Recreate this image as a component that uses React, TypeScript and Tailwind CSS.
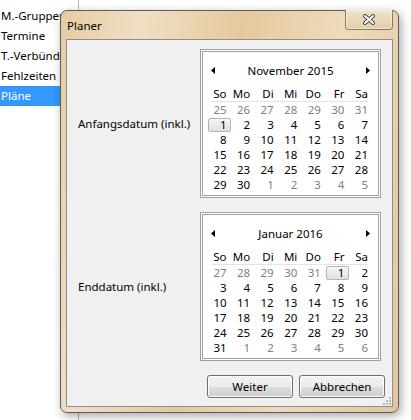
import React from 'react';

interface DayCell {
  d: number;
  cur: boolean;
}

const buildDays = (lead: number, prevLen: number, len: number): DayCell[] => {
  const cells: DayCell[] = [];
  for (let i = lead; i > 0; i--) cells.push({ d: prevLen - i + 1, cur: false });
  for (let d = 1; d <= len; d++) cells.push({ d, cur: true });
  let n = 1;
  while (cells.length < 42) cells.push({ d: n++, cur: false });
  return cells;
};

const weekDays = ['So', 'Mo', 'Di', 'Mi', 'Do', 'Fr', 'Sa'];

const listItems = ['M.-Gruppen', 'Termine', 'T.-Verbünde', 'Fehlzeiten', 'Pläne'];

const Arrow = ({ dir }: { dir: 'left' | 'right' }) => (
  <svg width="4" height="7" viewBox="0 0 4 7">
    {dir === 'left' ? <polygon points="4,0 4,7 0,3.5" fill="#000" /> : <polygon points="0,0 0,7 4,3.5" fill="#000" />}
  </svg>
);

const Calendar = ({ title, days }: { title: string; days: DayCell[] }) => {
  return (
    <div className="w-[181px] border border-[#a0a0a0] bg-white p-px">
      <div className="border border-[#a0a0a0] bg-white pt-[11px] pb-[3px]">
        <div className="flex h-[15px] items-center justify-between pl-[8px] pr-[8px]">
          <Arrow dir="left" />
          <span className="text-[11.5px] leading-none text-black">{title}</span>
          <Arrow dir="right" />
        </div>
        <div className="mt-[8px] grid h-[15px] grid-cols-7 pr-[10px]">
          {weekDays.map((w) => (
            <span key={w} className="text-right text-[11.5px] leading-[15px] text-black">
              {w}
            </span>
          ))}
        </div>
        <div className="ml-[9px] mr-[10px] h-px bg-[#e3e3e3]" />
        <div className="grid grid-cols-7 pr-[10px]">
          {days.map((c, i) => {
            const marked = c.cur && c.d === 1;
            return (
              <span
                key={i}
                className={`relative h-[15px] text-right text-[11.5px] leading-[15px] ${c.cur ? 'text-black' : 'text-[#808080]'}`}
              >
                {marked && (
                  <span className="absolute left-[5px] top-[1px] h-[14px] w-[23px] rounded-[2px] border border-[#b4b4b4] bg-[linear-gradient(#f6f6f6,#e0e0e0)]" />
                )}
                <span className="relative">{c.d}</span>
              </span>
            );
          })}
        </div>
      </div>
    </div>
  );
};

const WinButton = ({ label }: { label: string }) => (
  <button className="h-[23px] w-[86px] rounded-[3px] border border-[#707070] bg-[linear-gradient(#f2f2f2_0%,#ebebeb_50%,#dddddd_50%,#cfcfcf_100%)] text-[11.5px] text-black shadow-[inset_0_0_0_1px_#fcfcfc]">
    {label}
  </button>
);

export default function App() {
  const nov = buildDays(7, 31, 30);
  const jan = buildDays(5, 31, 31);

  return (
    <div className="relative h-[420px] w-[411px] overflow-hidden bg-white font-['Noto_Sans',sans-serif]">
      <div className="h-full w-[79px] border-r border-[#b9b9b9] pt-[6px]">
        {listItems.map((item) => (
          <div
            key={item}
            className={`h-[20px] whitespace-nowrap pl-px text-[11.5px] leading-[20px] ${item === 'Pläne' ? 'bg-[#3399ff] text-white' : 'text-black'}`}
          >
            {item}
          </div>
        ))}
      </div>

      {/* dialog window */}
      <div className="absolute left-[60px] top-[10px] flex h-[403px] w-[339px] flex-col rounded-[7px] border border-[#5c5c5c] bg-[linear-gradient(100deg,#e6cca2_0%,#f0dfc4_20%,#e5c99e_45%,#eedbbb_70%,#e3c69a_100%)] px-[5px] pb-[5px] pt-[28px] shadow-[2px_3px_10px_rgba(0,0,0,0.35)]">
        <span className="absolute left-[6px] top-[7px] text-[11.5px] leading-[16px] text-black">Planer</span>
        <div className="absolute right-[5px] top-[-1px] flex h-[20px] w-[48px] items-center justify-center rounded-b-[4px] border border-t-0 border-[#8b7b62] bg-[linear-gradient(#f1e3cc,#e4cda8)] shadow-[inset_0_0_0_1px_rgba(255,255,255,0.45)]">
          <svg width="14" height="11" viewBox="0 0 14 11">
            <path d="M3 2 L11 9 M11 2 L3 9" stroke="#4a4a4a" strokeWidth="4" strokeLinecap="round" />
            <path d="M3 2 L11 9 M11 2 L3 9" stroke="#ffffff" strokeWidth="2" strokeLinecap="round" />
          </svg>
        </div>

        <div className="relative flex flex-1 flex-col border border-[#8e8e8e] bg-[#f0f0f0] pt-[9px]">
          <div className="flex items-center pr-[11px]">
            <span className="flex-1 pl-[11px] text-[11.5px] text-black">Anfangsdatum (inkl.)</span>
            <Calendar title="November 2015" days={nov} />
          </div>
          <div className="mt-[14px] flex items-center pr-[11px]">
            <span className="flex-1 pl-[11px] text-[11.5px] text-black">Enddatum (inkl.)</span>
            <Calendar title="Januar 2016" days={jan} />
          </div>
          <div className="mt-[14px] flex justify-end gap-[6px] pr-[7px]">
            <WinButton label="Weiter" />
            <WinButton label="Abbrechen" />
          </div>
          <svg className="absolute bottom-[1px] right-[1px]" width="8" height="8" viewBox="0 0 8 8">
            <rect x="6" y="0" width="2" height="2" fill="#b8b8b8" />
            <rect x="3" y="3" width="2" height="2" fill="#b8b8b8" />
            <rect x="6" y="3" width="2" height="2" fill="#b8b8b8" />
            <rect x="0" y="6" width="2" height="2" fill="#b8b8b8" />
            <rect x="3" y="6" width="2" height="2" fill="#b8b8b8" />
            <rect x="6" y="6" width="2" height="2" fill="#b8b8b8" />
          </svg>
        </div>
      </div>
    </div>
  );
}
